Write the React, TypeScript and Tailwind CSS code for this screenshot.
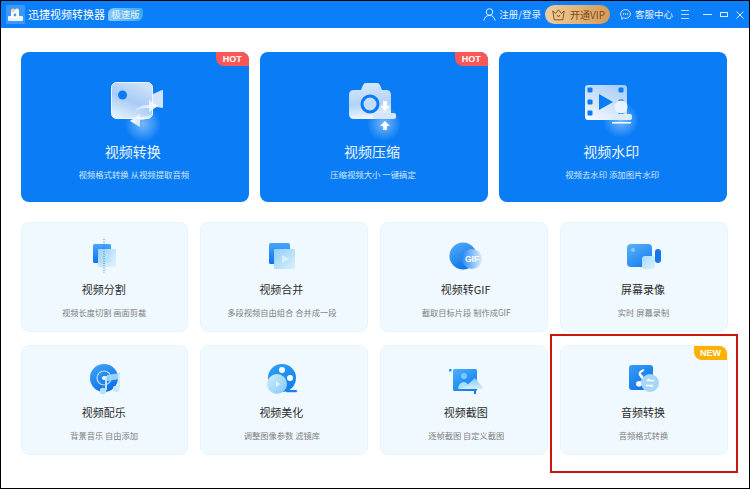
import React from 'react';

const Glow = ({ id, cx, cy, r }: { id: string; cx: number; cy: number; r: number }) => (
  <>
    <radialGradient id={id}>
      <stop offset="0%" stopColor="#ffffff" stopOpacity="0.45" />
      <stop offset="100%" stopColor="#ffffff" stopOpacity="0" />
    </radialGradient>
    <circle cx={cx} cy={cy} r={r} fill={`url(#${id})`} />
  </>
);

const ConvertIcon = () => (
  <svg width="60" height="56" viewBox="0 0 60 56" className="overflow-visible">
    <defs>
      <linearGradient id="c1" x1="0.7" y1="0" x2="0.2" y2="1">
        <stop offset="0%" stopColor="#cfe2fa" />
        <stop offset="50%" stopColor="#a6cbf6" />
        <stop offset="100%" stopColor="#e6f1fd" />
      </linearGradient>
      <linearGradient id="c3" x1="0" y1="0" x2="1" y2="0">
        <stop offset="0%" stopColor="#ffffff" stopOpacity="0.35" />
        <stop offset="100%" stopColor="#ffffff" />
      </linearGradient>
      <linearGradient id="c4" x1="1" y1="0" x2="0" y2="0">
        <stop offset="0%" stopColor="#ffffff" stopOpacity="0.35" />
        <stop offset="100%" stopColor="#ffffff" />
      </linearGradient>
    </defs>
    <Glow id="c2" cx={38} cy={44} r={18} />
    <rect x="6.5" y="2.5" width="41" height="36" rx="5" fill="url(#c1)" stroke="#eef6ff" />
    <path d="M48 14 L57 10 Q58 10 58 11 L58 27 Q58 28 57 28 L48 26 Z" fill="#d2e4fb" />
    <circle cx="17.5" cy="15" r="4.5" fill="#0a7bf5" />
    <path d="M30 31 C33 26 38 25 44 25 L44 20 L53 26 L44 32 L44 28 C38 28 34 29 30 31 Z" fill="url(#c3)" />
    <path d="M48 33 C45 39 40 40 35 40 L35 47 L25 41 L35 34 L35 37 C41 37 45 36 48 33 Z" fill="url(#c4)" />
  </svg>
);

const CompressIcon = () => (
  <svg width="60" height="56" viewBox="0 0 60 56" className="overflow-visible">
    <defs>
      <linearGradient id="p1" x1="0.2" y1="0" x2="0.3" y2="1">
        <stop offset="0%" stopColor="#d8e9fc" />
        <stop offset="60%" stopColor="#b2d2f7" />
        <stop offset="100%" stopColor="#f2f8ff" />
      </linearGradient>
    </defs>
    <Glow id="p2" cx={40} cy={44} r={17} />
    <path d="M5 15 Q5 10 10 10 L17 10 L19 5 Q20 3 22 3 L33 3 Q35 3 36 5 L38 10 L42 10 Q47 10 47 15 L47 39 L10 39 Q5 39 5 34 Z" fill="url(#p1)" />
    <circle cx="26" cy="24" r="8" fill="#c3dcf8" stroke="#0a7bf5" strokeWidth="3" />
    <path d="M39 21 L43 21 L43 26 L46 26 L41 31 L36 26 L39 26 Z" fill="#ffffff" />
    <rect x="29" y="33" width="23" height="6" rx="2" fill="#d4e6fb" />
    <path d="M41 41 L46 46 L43 46 L43 50 L39 50 L39 46 L36 46 Z" fill="#ffffff" />
  </svg>
);

const WatermarkIcon = () => (
  <svg width="60" height="56" viewBox="0 0 60 56" className="overflow-visible">
    <defs>
      <linearGradient id="w1" x1="0.8" y1="0" x2="0.2" y2="1">
        <stop offset="0%" stopColor="#a9cdf6" />
        <stop offset="100%" stopColor="#f2f8ff" />
      </linearGradient>
    </defs>
    <Glow id="w2" cx={38} cy={40} r={18} />
    <rect x="2" y="5" width="42" height="35" rx="3" fill="url(#w1)" />
    {[7, 38].map((x) =>
      [10, 22, 33].map((y) => <rect key={`${x}-${y}`} x={x - 2.5} y={y - 2.5} width="5" height="5" rx="1" fill="#0a7bf5" />),
    )}
    <path d="M16 14 L30 22 L16 30 Z" fill="#0a7bf5" />
    <circle cx="38" cy="27" r="6.5" fill="#eaf4fe" />
    <rect x="28" y="34" width="21" height="6" rx="2" fill="#dcebfc" />
    <rect x="29" y="42" width="19" height="1.5" fill="#ffffff" />
  </svg>
);

const SplitIcon = () => (
  <svg width="40" height="38" viewBox="0 0 40 38">
    <defs>
      <linearGradient id="s1" x1="0" y1="0" x2="0" y2="1">
        <stop offset="0%" stopColor="#49a5ff" />
        <stop offset="100%" stopColor="#0a74ee" />
      </linearGradient>
      <linearGradient id="s2" x1="0" y1="0" x2="1" y2="1">
        <stop offset="0%" stopColor="#a6d7fa" />
        <stop offset="100%" stopColor="#e0f2fd" />
      </linearGradient>
    </defs>
    <rect x="8" y="7" width="18" height="19" rx="1.5" fill="url(#s1)" />
    <rect x="13" y="12" width="18" height="18" rx="1" fill="url(#s2)" opacity="0.95" />
    <line x1="19" y1="2" x2="19" y2="36" stroke="#1480e6" strokeWidth="1" strokeDasharray="1 1.4" />
  </svg>
);

const MergeIcon = () => (
  <svg width="40" height="38" viewBox="0 0 40 38">
    <defs>
      <linearGradient id="m1" x1="0" y1="0" x2="0" y2="1">
        <stop offset="0%" stopColor="#49a5ff" />
        <stop offset="100%" stopColor="#0a74ee" />
      </linearGradient>
      <linearGradient id="m2" x1="0" y1="0" x2="1" y2="1">
        <stop offset="0%" stopColor="#8fcdf9" />
        <stop offset="100%" stopColor="#dcf0fd" />
      </linearGradient>
    </defs>
    <rect x="5" y="6" width="21" height="21" rx="1.5" fill="url(#m1)" />
    <rect x="10" y="12" width="21" height="20" rx="1" fill="url(#m2)" />
    <path d="M18 18 L25 22 L18 26 Z" fill="#d8f0fe" />
  </svg>
);

const GifIcon = () => (
  <svg width="40" height="38" viewBox="0 0 40 38">
    <defs>
      <linearGradient id="g1" x1="0" y1="0" x2="0.6" y2="1">
        <stop offset="0%" stopColor="#55adfb" />
        <stop offset="100%" stopColor="#0c72ea" />
      </linearGradient>
      <linearGradient id="g2" x1="0" y1="0" x2="1" y2="0">
        <stop offset="0%" stopColor="#2b8af7" />
        <stop offset="100%" stopColor="#d8eefc" />
      </linearGradient>
    </defs>
    <circle cx="19" cy="19" r="13.5" fill="url(#g1)" />
    <circle cx="28" cy="22" r="10" fill="url(#g2)" />
    <text x="28" y="25" textAnchor="middle" fontSize="8.5" fontWeight="700" fill="#ffffff" fontFamily="'Liberation Sans',sans-serif">
      GIF
    </text>
  </svg>
);

const RecordIcon = () => (
  <svg width="40" height="38" viewBox="0 0 40 38">
    <defs>
      <linearGradient id="r1" x1="0" y1="0" x2="0.7" y2="1">
        <stop offset="0%" stopColor="#5bb3fc" />
        <stop offset="100%" stopColor="#1a7ff0" />
      </linearGradient>
      <linearGradient id="r2" x1="0" y1="0" x2="1" y2="1">
        <stop offset="0%" stopColor="#a5dcfb" />
        <stop offset="100%" stopColor="#dcf2fd" />
      </linearGradient>
    </defs>
    <rect x="3" y="7" width="25" height="23" rx="4" fill="url(#r1)" />
    <circle cx="9" cy="13" r="2" fill="#8ccbfb" />
    <rect x="31" y="12" width="6" height="14" rx="3" fill="#1277ee" />
    <rect x="18" y="19" width="13" height="13" rx="3" fill="url(#r2)" />
  </svg>
);

const MusicIcon = () => (
  <svg width="40" height="38" viewBox="0 0 40 38">
    <defs>
      <linearGradient id="a1" x1="0" y1="0" x2="0.5" y2="1">
        <stop offset="0%" stopColor="#44a6fb" />
        <stop offset="100%" stopColor="#0f72e8" />
      </linearGradient>
    </defs>
    <circle cx="19" cy="18" r="14" fill="url(#a1)" />
    <circle cx="19" cy="18" r="7" fill="none" stroke="#b9dffb" strokeWidth="1.2" />
    <circle cx="19" cy="18" r="2" fill="#ffffff" />
    <path d="M22 15 L35 13 L35 19 L22 21 Z" fill="#a4d8f8" opacity="0.9" />
    <rect x="20" y="16" width="2" height="14" fill="#bfe4fa" />
    <rect x="33" y="14" width="2" height="14" fill="#cdeafb" />
    <circle cx="18" cy="31" r="3.2" fill="#b5dffa" />
    <circle cx="31" cy="29" r="3.2" fill="#c9e9fb" />
  </svg>
);

const BeautyIcon = () => (
  <svg width="40" height="38" viewBox="0 0 40 38">
    <defs>
      <linearGradient id="b1" x1="0" y1="0" x2="0.6" y2="1">
        <stop offset="0%" stopColor="#2ca3f6" />
        <stop offset="100%" stopColor="#1481ec" />
      </linearGradient>
      <linearGradient id="b2" x1="0" y1="0" x2="1" y2="1">
        <stop offset="0%" stopColor="#d3eefc" />
        <stop offset="100%" stopColor="#82c8f8" />
      </linearGradient>
    </defs>
    <circle cx="18" cy="18" r="14" fill="url(#b1)" />
    <rect x="22" y="30" width="11" height="2.2" rx="1" fill="#1481ec" />
    <circle cx="18" cy="10" r="3" fill="#ffffff" />
    <circle cx="26" cy="18" r="3" fill="#ffffff" />
    <circle cx="13" cy="24" r="10" fill="url(#b2)" />
    <path d="M12 21 L16 24 L12 27 Z" fill="#e6f6fe" />
  </svg>
);

const CaptureIcon = () => (
  <svg width="40" height="38" viewBox="0 0 40 38">
    <defs>
      <linearGradient id="t1" x1="0" y1="0" x2="0.7" y2="1">
        <stop offset="0%" stopColor="#4db0fc" />
        <stop offset="100%" stopColor="#0f7ff0" />
      </linearGradient>
      <linearGradient id="t2" x1="0.5" y1="0" x2="0.5" y2="1">
        <stop offset="0%" stopColor="#7fcdf9" />
        <stop offset="100%" stopColor="#d5effc" />
      </linearGradient>
    </defs>
    <rect x="5" y="9" width="2.5" height="2.5" fill="#2f93f4" />
    <rect x="9" y="9" width="24" height="22" rx="1.5" fill="url(#t1)" />
    <rect x="30" y="31" width="2" height="3" fill="#0f7ff0" />
    <circle cx="20" cy="16" r="3" fill="#74cbfb" />
    <path d="M14 29 Q15 22 20 22 Q24 22 25 29 Z" fill="#a8dffa" />
    <path d="M17 29 Q24 25 31 18 L40 29 Z" fill="url(#t2)" />
  </svg>
);

const AudioIcon = () => (
  <svg width="40" height="38" viewBox="0 0 40 38">
    <defs>
      <linearGradient id="u1" x1="0" y1="0" x2="0.7" y2="1">
        <stop offset="0%" stopColor="#389bf8" />
        <stop offset="100%" stopColor="#0f74ea" />
      </linearGradient>
    </defs>
    <rect x="5" y="5" width="24" height="25" rx="3" fill="url(#u1)" />
    <path d="M20 9 C14 11 13 14 17 18 C19 20 17 22 15 21 C12 21 11 24 13 26 C16 28 19 25 18.5 22 C21 20 20 16 17 14 C16 13 18 12 20 11 Z" fill="#ffffff" />
    <circle cx="26" cy="23" r="9" fill="#a7d6f9" />
    <path d="M30 20.5 L23 20.5 M23 20.5 L25 19 M22 25.5 L29 25.5 M29 25.5 L27 27" stroke="#ffffff" strokeWidth="1.3" fill="none" />
  </svg>
);

const Badge = ({ label, color }: { label: string; color: string }) => (
  <div
    className={`absolute top-0 right-0 w-[33px] h-[14px] flex items-center justify-center rounded-tr-lg rounded-bl-lg text-[9px] leading-none font-bold text-white font-['Liberation_Sans',sans-serif] ${color}`}
  >
    {label}
  </div>
);

const bigCards = [
  { title: '视频转换', desc: '视频格式转换 从视频提取音频', icon: <ConvertIcon />, hot: true },
  { title: '视频压缩', desc: '压缩视频大小 一键搞定', icon: <CompressIcon />, hot: true },
  { title: '视频水印', desc: '视频去水印 添加图片水印', icon: <WatermarkIcon />, hot: false },
];

const smallCards = [
  { title: '视频分割', desc: '视频长度切割 画面剪裁', icon: <SplitIcon />, shift: '' },
  { title: '视频合并', desc: '多段视频自由组合 合并成一段', icon: <MergeIcon />, shift: 'mr-1' },
  { title: '视频转GIF', desc: '截取目标片段 制作成GIF', icon: <GifIcon />, shift: 'ml-[5px]' },
  { title: '屏幕录像', desc: '实时 屏幕录制', icon: <RecordIcon />, shift: '' },
  { title: '视频配乐', desc: '背景音乐 自由添加', icon: <MusicIcon />, shift: '' },
  { title: '视频美化', desc: '调整图像参数 滤镜库', icon: <BeautyIcon />, shift: 'mr-1' },
  { title: '视频截图', desc: '逐帧截图 自定义截图', icon: <CaptureIcon />, shift: 'ml-[5px]' },
  { title: '音频转换', desc: '音频格式转换', icon: <AudioIcon />, shift: '', isNew: true },
];

const App = () => {
  return (
    <div className="relative w-[750px] h-[489px] overflow-hidden border border-black bg-white font-['Noto_Sans_CJK_SC',sans-serif]">
      {/* title bar */}
      <div className="flex items-center h-[27px] bg-[#0b7efa] text-white">
        <div className="flex items-center justify-center w-[19px] h-[19px] ml-[5px] bg-[#3b97fb]">
          <svg width="15" height="13" viewBox="0 0 15 13">
            <rect x="0" y="8" width="15" height="5" rx="1" fill="#eaf4ff" />
            <rect x="3" y="3" width="8" height="7" rx="1" fill="#ffffff" />
            <circle cx="5" cy="2.5" r="2" fill="#ffd9a0" />
            <circle cx="9" cy="2.5" r="2" fill="#ffffff" />
            <circle cx="7" cy="7" r="1.4" fill="#3b97fb" />
          </svg>
        </div>
        <span className="ml-[3px] text-[11px] leading-none">迅捷视频转换器</span>
        <span className="ml-[3px] flex items-center justify-center w-[35px] h-[13px] rounded-tl-[6px] rounded-br-[6px] rounded-tr-[2px] rounded-bl-[2px] bg-gradient-to-r from-[#83c8fb] to-[#33a6f2] text-[9.5px] leading-none text-[#e8f5ff]">
          极速版
        </span>
        <div className="flex-1" />
        <svg width="13" height="13" viewBox="0 0 13 13" fill="none" stroke="#dcecff" strokeWidth="1">
          <circle cx="6.5" cy="4" r="3.3" />
          <path d="M0.8 12.6 C1.5 9 4 7.4 6.5 7.4 C9 7.4 11.5 9 12.2 12.6" />
        </svg>
        <span className="ml-[3px] text-[9.5px] leading-none text-[#e6f2ff]">注册/登录</span>
        <div className="ml-[4px] flex items-center w-[65px] h-[19px] rounded-full bg-gradient-to-r from-[#f1cd9b] to-[#d59a56] text-[#7b4c1c]">
          <svg className="ml-[7px]" width="13" height="12" viewBox="0 0 13 12" fill="none" stroke="#7b4c1c" strokeWidth="0.9">
            <path d="M0.8 2 L3.6 4.4 L6.5 0.8 L9.4 4.4 L12.2 2 L10.8 10.8 L2.2 10.8 Z" />
            <path d="M5 6 L6.5 8 L8 6" />
          </svg>
          <span className="ml-[5px] text-[10px] leading-none whitespace-nowrap">开通VIP</span>
        </div>
        <svg className="ml-[10px]" width="11" height="11" viewBox="0 0 11 11" fill="none" stroke="#dcecff" strokeWidth="0.9">
          <path d="M5.5 0.6 C8.3 0.6 10.4 2.6 10.4 5 C10.4 7.4 8.3 9.4 5.5 9.4 C4.8 9.4 4.2 9.3 3.6 9.1 L1.6 10.2 L2 8 C1 7.2 0.6 6.2 0.6 5 C0.6 2.6 2.7 0.6 5.5 0.6 Z" />
          <circle cx="3.5" cy="5" r="0.4" />
          <circle cx="5.5" cy="5" r="0.4" />
          <circle cx="7.5" cy="5" r="0.4" />
        </svg>
        <span className="ml-[4px] text-[9.5px] leading-none text-[#e6f2ff] whitespace-nowrap">客服中心</span>
        <div className="ml-[8px] flex flex-col gap-[3px] w-[8px]">
          <div className="h-px bg-[#bcdcff]" />
          <div className="h-px bg-[#bcdcff]" />
          <div className="h-px bg-[#bcdcff]" />
        </div>
        <div className="ml-[14px] w-[9px] h-px bg-[#dcecff]" />
        <div className="ml-[8px] w-[8px] h-[5px] border border-[#dcecff]" />
        <svg className="ml-[8px] mr-[5px]" width="8" height="8" viewBox="0 0 8 8" stroke="#dcecff" strokeWidth="1">
          <path d="M0.5 0.5 L7.5 7.5 M7.5 0.5 L0.5 7.5" />
        </svg>
      </div>

      <div className="pt-6 pl-5 pr-[21px]">
        <div className="grid grid-cols-3 gap-[11.5px] mr-px">
          {bigCards.map((card) => (
            <div key={card.title} className="relative flex flex-col items-center h-[150px] pt-[28px] rounded-lg bg-[#0a7df6] text-white">
              {card.hot && <Badge label="HOT" color="bg-[#fb5757]" />}
              {card.icon}
              <div className="mt-[5px] mr-1 text-[14px] leading-5 text-[#eaf4ff]">{card.title}</div>
              <div className="mt-[7px] mr-0.5 text-[8.4px] leading-3 text-[#d5e8fe]">{card.desc}</div>
            </div>
          ))}
        </div>

        <div className="grid grid-cols-[167.4px_168px_167.6px_168px] gap-x-3 gap-y-[13px] mt-5">
          {smallCards.map((card) => (
            <div
              key={card.title}
              className="relative flex flex-col items-center h-[110px] pt-[14px] rounded-lg border border-[#e8f5fd] bg-[#f0f9ff]"
            >
              {card.isNew && <Badge label="NEW" color="bg-[#ffb000]" />}
              {card.icon}
              <div className={`flex flex-col items-center ${card.shift}`}>
                <div className="mt-[6px] mr-0.5 text-[11px] leading-4 text-[#2b2b2b]">{card.title}</div>
                <div className="mt-[9px] mr-px text-[8.25px] leading-3 text-[#808080]">{card.desc}</div>
              </div>
            </div>
          ))}
        </div>
      </div>

      {/* annotation box drawn over the screenshot */}
      <div className="absolute left-[549px] top-[333px] w-[188px] h-[139px] border-2 border-[#c9170f]" />
    </div>
  );
};

export default App;
